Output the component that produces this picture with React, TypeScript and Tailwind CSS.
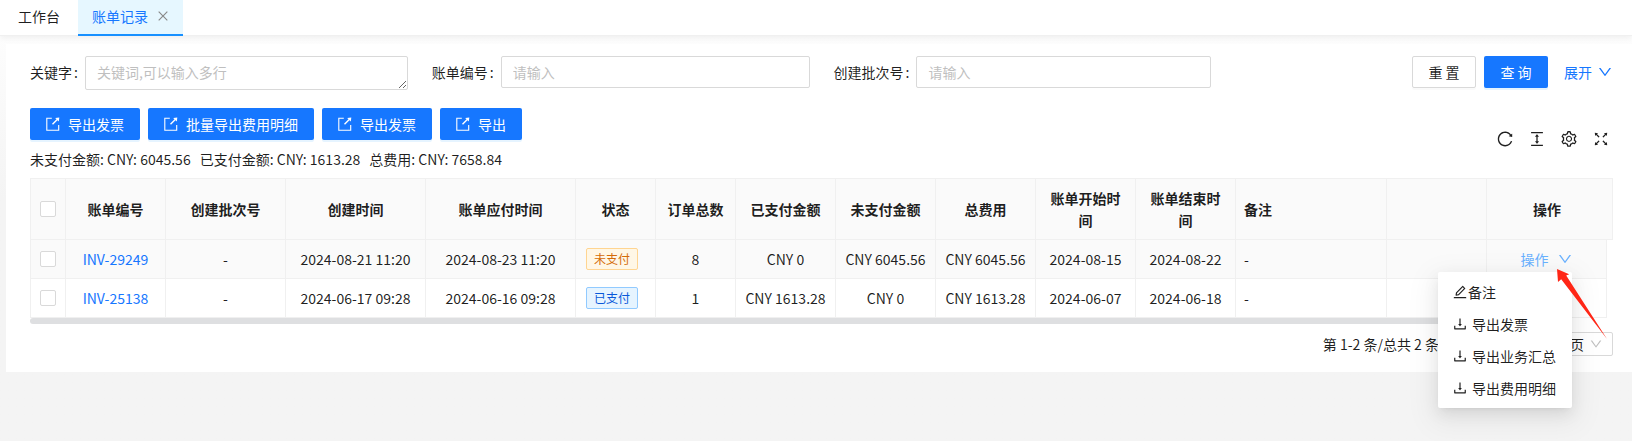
import React, { useState } from 'react';
import {
  AiOutlineClose,
  AiOutlineColumnHeight,
  AiOutlineDown,
  AiOutlineDownload,
  AiOutlineEdit,
  AiOutlineFullscreen,
  AiOutlineReload,
  AiOutlineSetting,
} from 'react-icons/ai';

const COLUMNS = [
  { title: '账单编号', width: 'w-[100px]' },
  { title: '创建批次号', width: 'w-[120px]' },
  { title: '创建时间', width: 'w-[140px]' },
  { title: '账单应付时间', width: 'w-[150px]' },
  { title: '状态', width: 'w-20' },
  { title: '订单总数', width: 'w-20' },
  { title: '已支付金额', width: 'w-[100px]' },
  { title: '未支付金额', width: 'w-[100px]' },
  { title: '总费用', width: 'w-[100px]' },
  { title: '账单开始时间', width: 'w-[100px]' },
  { title: '账单结束时间', width: 'w-[100px]' },
];

const BILLS = [
  {
    id: 'INV-29249', batch: '-', created: '2024-08-21 11:20', due: '2024-08-23 11:20', paidUp: false,
    orders: 8, paid: 'CNY 0', unpaid: 'CNY 6045.56', total: 'CNY 6045.56', start: '2024-08-15', end: '2024-08-22',
  },
  {
    id: 'INV-25138', batch: '-', created: '2024-06-17 09:28', due: '2024-06-16 09:28', paidUp: true,
    orders: 1, paid: 'CNY 1613.28', unpaid: 'CNY 0', total: 'CNY 1613.28', start: '2024-06-07', end: '2024-06-18',
  },
];

const EXPORTS = ['导出发票', '批量导出费用明细', '导出发票', '导出'];
const MENU_EXPORTS = ['导出发票', '导出业务汇总', '导出费用明细'];

function ExportIcon() {
  return (
    <svg viewBox="0 0 14 14" className="w-[14px] h-[14px]" fill="none" stroke="currentColor" aria-hidden="true">
      <path d="M5.800 1.300H.8v11.900h11.900V8" strokeWidth="1.1" />
      <path d="M6.500 7.300l5-5" strokeWidth="1.4" />
      <path d="M9.200 1l4.100-.5-.5 4.100z" fill="currentColor" stroke="none" />
    </svg>
  );
}

function Checkbox({ label }: { label: string }) {
  return (
    <input
      type="checkbox"
      aria-label={label}
      className="block mx-auto w-4 h-4 appearance-none rounded-xs border border-[#d9d9d9] bg-white checked:bg-[#1677ff]"
    />
  );
}

function FieldLabel({ htmlFor, children }: { htmlFor: string; children: React.ReactNode }) {
  return (
    <label htmlFor={htmlFor} className="shrink-0 leading-8">
      {children}
      <span className="ml-0.5">:</span>
    </label>
  );
}

function ActionCell() {
  const [open, setOpen] = useState(true);

  return (
    <div className="relative flex justify-center">
      <button onClick={() => setOpen(!open)} className="flex items-center gap-2 text-[#69b1ff]">
        操作 <AiOutlineDown size={16} />
      </button>
      {open && (
        <ul className="absolute top-6 right-[26px] z-10 w-[134px] p-1 rounded-xs bg-white shadow-[0_6px_16px_0_rgba(0,0,0,0.08),0_3px_6px_-4px_rgba(0,0,0,0.12),0_9px_28px_8px_rgba(0,0,0,0.05)]">
          <li>
            <button className="flex items-center w-full px-2.5 py-[5px] leading-[22px]">
              <AiOutlineEdit size={16} />备注
            </button>
          </li>
          {MENU_EXPORTS.map((item) => (
            <li key={item}>
              <button className="flex items-center gap-1 w-full px-2.5 py-[5px] leading-[22px] whitespace-nowrap">
                <AiOutlineDownload size={16} className="shrink-0" />{item}
              </button>
            </li>
          ))}
        </ul>
      )}
      {/* Pointer over the row menu */}
      <svg viewBox="0 0 52 72" className="absolute top-5 -right-2.5 z-20 w-[52px] h-[72px] pointer-events-none" aria-hidden="true">
        <path d="M1 1l12.200 5.200-3 1.400L51 71 5.200 11.300 2 14z" fill="#ff2616" />
      </svg>
    </div>
  );
}

const cell = 'border-r border-b border-[#f0f0f0] p-2 text-center';
const field = 'block min-w-0 flex-1 rounded-xs border border-[#d9d9d9] bg-white px-[11px] py-1 leading-[22px] placeholder:text-[#bfbfbf] outline-none';

export default function App() {
  return (
    <div className="min-h-screen bg-linear-to-b from-white to-[#f4f4f4] to-45% font-['Noto_Sans_CJK_SC',sans-serif] text-sm leading-[22px] text-black/88">
      <nav className="relative flex h-9 bg-white border-b border-[#f0f0f0] shadow-[0_2px_6px_rgba(0,0,0,0.06)]">
        <a href="#workbench" className="px-[18px] py-[5px]">工作台</a>
        <div className="flex items-center gap-2 h-9 pl-[14px] pr-[13px] pb-0.5 bg-[#e6f7ff] border-b-2 border-[#1890ff]">
          <a href="#bills" className="text-[#1677ff]">账单记录</a>
          <button aria-label="关闭" className="text-[#888]"><AiOutlineClose size={14} /></button>
        </div>
      </nav>

      <main className="mt-2 ml-1.5 pt-3 pb-4 pl-6 pr-[19px] bg-white">
        <form className="grid grid-cols-4 gap-6" onSubmit={(e) => e.preventDefault()}>
          <div className="flex items-start gap-[7px]">
            <FieldLabel htmlFor="keyword">关键字</FieldLabel>
            <textarea id="keyword" rows={1} placeholder="关键词,可以输入多行" className={`${field} h-[34px] resize-y overflow-hidden`} />
          </div>
          <div className="flex items-start gap-[7px]">
            <FieldLabel htmlFor="bill-no">账单编号</FieldLabel>
            <input id="bill-no" placeholder="请输入" className={field} />
          </div>
          <div className="flex items-start gap-[7px]">
            <FieldLabel htmlFor="batch-no">创建批次号</FieldLabel>
            <input id="batch-no" placeholder="请输入" className={field} />
          </div>
          <div className="flex items-start justify-end gap-2">
            <button type="reset" className="w-16 h-8 rounded-xs border border-[#d9d9d9] shadow-[0_2px_0_rgba(0,0,0,0.02)]">重 置</button>
            <button type="submit" className="w-16 h-8 rounded-xs bg-[#1677ff] text-white shadow-[0_2px_0_rgba(5,145,255,0.1)]">查 询</button>
            <button type="button" className="flex items-center gap-[5px] h-8 ml-2 text-[#1677ff]">
              展开 <AiOutlineDown size={16} />
            </button>
          </div>
        </form>

        <div className="flex items-center justify-between mt-[18px]">
          <div>
            <div className="flex gap-2">
              {EXPORTS.map((label, idx) => (
                <button key={idx} className="flex items-center gap-2 h-8 px-4 rounded-xs bg-[#1677ff] text-white shadow-[0_2px_0_rgba(5,145,255,0.1)]">
                  <ExportIcon />{label}
                </button>
              ))}
            </div>
            <div className="flex gap-[9px] mt-2">
              <span>未支付金额: CNY: 6045.56</span>
              <span>已支付金额: CNY: 1613.28</span>
              <span>总费用: CNY: 7658.84</span>
            </div>
          </div>
          <div className="flex gap-[14px] pr-[3px]">
            <button aria-label="刷新"><AiOutlineReload size={18} /></button>
            <button aria-label="密度"><AiOutlineColumnHeight size={18} /></button>
            <button aria-label="列设置"><AiOutlineSetting size={18} /></button>
            <button aria-label="全屏"><AiOutlineFullscreen size={18} /></button>
          </div>
        </div>

        <table className="w-full mt-2 table-fixed border-separate border-spacing-0 border-l border-[#f0f0f0]">
          <colgroup>
            <col className="w-[35px]" />
            {COLUMNS.map((col) => <col key={col.title} className={col.width} />)}
            <col />
            <col className="w-[100px]" />
            <col className="w-[120px]" />
            <col className="w-1.5" />
          </colgroup>
          <thead>
            <tr className="h-[62px] bg-[#fafafa]">
              <th className={`${cell} border-t`}><Checkbox label="全选" /></th>
              {COLUMNS.map((col) => (
                <th key={col.title} className={`${cell} border-t font-semibold`}>{col.title}</th>
              ))}
              <th className={`${cell} border-t font-semibold text-left`}>备注</th>
              <td className={`${cell} border-t`} />
              <th className="border-t border-b border-[#f0f0f0] p-2 text-center font-semibold">操作</th>
              <td className="border-t border-r border-b border-[#f0f0f0]" />
            </tr>
          </thead>
          <tbody>
            {BILLS.map((bill) => (
              <tr key={bill.id} className="group">
                <td className={`${cell} group-first:bg-[#fafafa]`}><Checkbox label={bill.id} /></td>
                <td className={`${cell} group-first:bg-[#fafafa]`}><a href={`#${bill.id}`} className="text-[#1677ff]">{bill.id}</a></td>
                <td className={`${cell} group-first:bg-[#fafafa]`}>{bill.batch}</td>
                <td className={`${cell} group-first:bg-[#fafafa]`}>{bill.created}</td>
                <td className={`${cell} group-first:bg-[#fafafa]`}>{bill.due}</td>
                <td className={`${cell} group-first:bg-[#fafafa]`}>
                  <span
                    className={`block w-[52px] ml-0.5 rounded-xs border text-center text-xs leading-5 ${
                      bill.paidUp ? 'border-[#91caff] bg-[#e6f4ff] text-[#0958d9]' : 'border-[#ffd591] bg-[#fff7e6] text-[#d46b08]'
                    }`}
                  >
                    {bill.paidUp ? '已支付' : '未支付'}
                  </span>
                </td>
                <td className={`${cell} group-first:bg-[#fafafa]`}>{bill.orders}</td>
                <td className={`${cell} group-first:bg-[#fafafa]`}>{bill.paid}</td>
                <td className={`${cell} group-first:bg-[#fafafa]`}>{bill.unpaid}</td>
                <td className={`${cell} group-first:bg-[#fafafa]`}>{bill.total}</td>
                <td className={`${cell} group-first:bg-[#fafafa]`}>{bill.start}</td>
                <td className={`${cell} group-first:bg-[#fafafa]`}>{bill.end}</td>
                <td className={`${cell} group-first:bg-[#fafafa] text-left`}>-</td>
                <td className={`${cell} group-first:bg-[#fafafa]`} />
                <td className={`${cell} group-first:bg-[#fafafa]`}>{!bill.paidUp && <ActionCell />}</td>
                <td />
              </tr>
            ))}
          </tbody>
        </table>
        <div className="h-1.5 mr-20 rounded-full bg-[#dedfe1]" />

        <div className="flex items-center justify-end gap-2 mt-2">
          <span className="mr-[62px]">第 1-2 条/总共 2 条</span>
          <label className="relative flex items-center">
            <select aria-label="每页条数" className="h-6 w-[104px] appearance-none rounded-xs border border-[#d9d9d9] bg-white pl-2 pr-7 text-right leading-[22px]">
              <option>20 条/页</option>
            </select>
            <AiOutlineDown size={14} className="absolute right-2.5 text-[#bfbfbf] pointer-events-none" />
          </label>
        </div>
      </main>
    </div>
  );
}
